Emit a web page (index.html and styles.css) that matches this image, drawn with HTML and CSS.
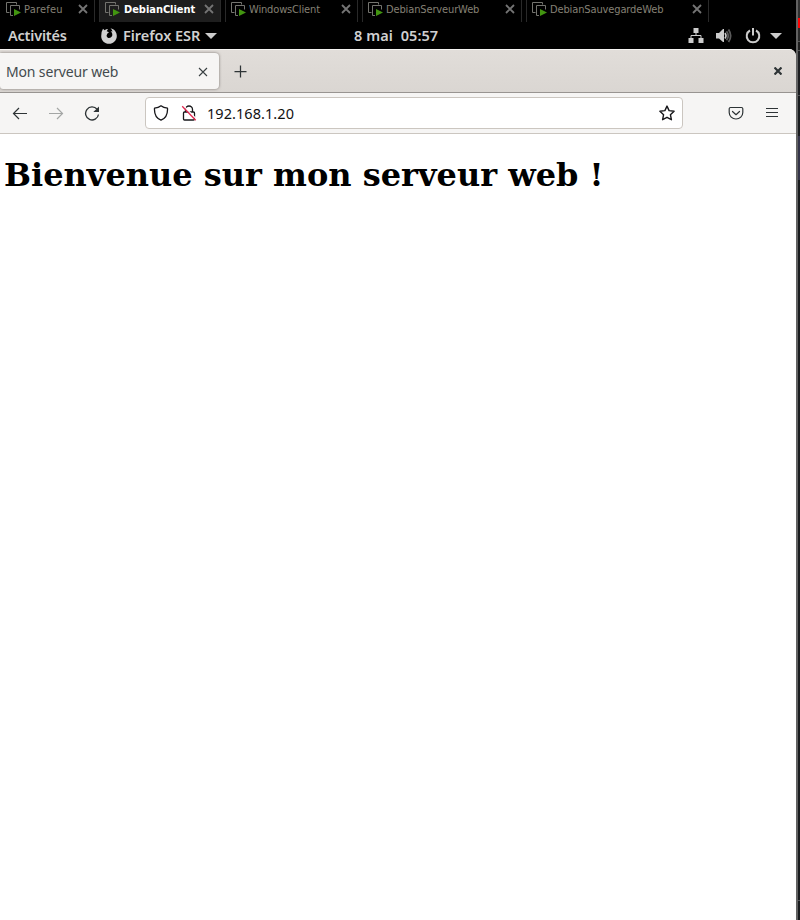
FILE: index.html
```html
<!DOCTYPE html>
<html lang="fr">
<head>
<meta charset="utf-8">
<title>Mon serveur web</title>
<link rel="stylesheet" href="styles.css">
</head>
<body>
<svg width="0" height="0" class="defs">
  <symbol id="vm" viewBox="0 0 15 15">
    <path d="M3.500 10.500h-3V.5h10v2M7 13.500H4.500v-10h9v4" fill="none" stroke="#74746f"/>
    <path d="M8 7l7 3.500-7 3.500z" fill="#429510"/>
  </symbol>
  <symbol id="vx" viewBox="0 0 10 10"><path d="M1 1l8 8M9 1L1 9" fill="none" stroke="#747474" stroke-width="1.800"/></symbol>
</svg>
<div class="screen">
  <main class="desktop">
    <nav class="vm-tabs">
      <div class="vm-tab t1"><svg class="vm-icon"><use href="#vm"/></svg><span>Parefeu</span><svg class="vm-close"><use href="#vx"/></svg></div>
      <div class="vm-tab t2 active"><svg class="vm-icon"><use href="#vm"/></svg><span>DebianClient</span><svg class="vm-close"><use href="#vx"/></svg></div>
      <div class="vm-tab t3"><svg class="vm-icon"><use href="#vm"/></svg><span>WindowsClient</span><svg class="vm-close"><use href="#vx"/></svg></div>
      <div class="vm-tab t4"><svg class="vm-icon"><use href="#vm"/></svg><span>DebianServeurWeb</span><svg class="vm-close"><use href="#vx"/></svg></div>
      <div class="vm-tab t5"><svg class="vm-icon"><use href="#vm"/></svg><span>DebianSauvegardeWeb</span><svg class="vm-close"><use href="#vx"/></svg></div>
    </nav>
    <header class="gnome">
      <span class="activities">Activités</span>
      <svg class="firefox" viewBox="0 0 16 16"><path d="M2 .8L3.600 2.200Q5 1 7 1L5.700 3.300 8 4.300 6.200 5.800Q4.800 8 6.500 9.500 8 10.600 9.800 9.600 11.800 8.300 11.300 6 11 4.200 9.700 3.200L11.500 3.500Q11 1.500 9.500.3C13.500 1 15.800 4.500 15.800 8 15.800 12.500 12.300 15.800 8 15.800S.2 12.500.2 8.200Q.2 3.500 2 .8z" fill="#d0d0d0"/></svg>
      <span class="app">Firefox ESR</span>
      <svg class="arrow" viewBox="0 0 12 6"><path d="M0 0h12L6 6z" fill="#ccc"/></svg>
      <time class="clock">8 mai&nbsp; 05:57</time>
      <svg class="network" viewBox="0 0 16 16"><path d="M5.500 0h5v5h-5zM.5 10h5v5h-5zM10.500 10h5v5h-5z" fill="#ccc"/><path d="M8 4v3.500M3 11V7.500h10V11" fill="none" stroke="#ccc"/></svg>
      <svg class="volume" viewBox="0 0 16 14"><path d="M0 4h3l4-4h1v13H7L3 9.500H0z" fill="#ccc"/><path d="M9 4q2 2.800 0 5.500" fill="none" stroke="#ccc" stroke-width="1.600"/><path d="M10.500 2.200q3.500 4.500 0 9M12.500.5q4.300 6.300 0 12.500" fill="none" stroke="#5a5a5a" stroke-width="1.800"/></svg>
      <svg class="power" viewBox="0 0 16 16"><path d="M5 2.500a6.300 6.300 0 1 0 6 0" fill="none" stroke="#ccc" stroke-width="2"/><path d="M8 0v7.500" stroke="#ccc" stroke-width="2"/></svg>
      <svg class="arrow" viewBox="0 0 12 6"><path d="M0 0h12L6 6z" fill="#ccc"/></svg>
    </header>
    <section class="browser">
      <div class="titlebar">
        <div class="page-tab"><span>Mon serveur web</span><svg class="tab-close" viewBox="0 0 10 10"><path d="M1 1l8 8M9 1L1 9" stroke="#3a4043" stroke-width="1.100"/></svg></div>
        <svg class="new-tab" viewBox="0 0 13 13"><path d="M6.500 .5v12M.5 6.500h12" stroke="#2e3436" stroke-width="1.250"/></svg>
        <svg class="window-close" viewBox="0 0 8 8"><path d="M.5.5l7 7M7.500.5l-7 7" stroke="#2e3436" stroke-width="2.200"/></svg>
      </div>
      <div class="toolbar">
        <svg class="icon back" viewBox="0 0 16 16"><path d="M15 8.500H1.500M7 3L1.500 8.500 7 14" fill="none" stroke="#2e3436" stroke-width="1.200"/></svg>
        <svg class="icon forward" viewBox="0 0 16 16"><path d="M1 8.500h13.500M9 3l5.500 5.500L9 14" fill="none" stroke="#a4a6a5" stroke-width="1.200"/></svg>
        <svg class="icon reload" viewBox="0 0 16 16"><path d="M13.100 4.300A6.500 6.500 0 1 0 14.500 9.500" fill="none" stroke="#2e3436" stroke-width="1.350"/><path d="M15 1.500v5.600H9.300z" fill="#2e3436"/></svg>
        <div class="url">
          <svg class="icon" viewBox="0 0 16 16"><path d="M8 .8C6 2.500 4 3 1.500 3.200 1.200 8.200 2.600 13 8 15.200 13.400 13 14.800 8.200 14.500 3.200 12 3 10 2.500 8 .8z" fill="none" stroke="#17171a" stroke-width="1.300" stroke-linejoin="round"/></svg>
          <svg class="icon lock" viewBox="0 0 16 16"><path d="M4.500 7V4.500a3.500 3.500 0 0 1 7 0V7M3.500 7h9q1 0 1 1v6q0 1-1 1h-9q-1 0-1-1V8q0-1 1-1z" fill="none" stroke="#17171a" stroke-width="1.300"/><path d="M2.500.8l13 13.400" stroke="#fff" stroke-width="1.300"/><path d="M1.200 1.200l13.500 14" stroke="#e22850" stroke-width="1.300"/></svg>
          <span>192.168.1.20</span>
          <svg class="icon star" viewBox="0 0 16 16"><path d="M8 1.100l2.100 4.500 5 .6-3.700 3.500 1 5L8 12.300l-4.400 2.400 1-5L.9 6.200l5-.6z" fill="none" stroke="#17171a" stroke-width="1.400" stroke-linejoin="round"/></svg>
        </div>
        <svg class="icon pocket" viewBox="0 0 16 16"><path d="M2.500 2.500h11q1.300 0 1.300 1.300v3.700a6.800 6.500 0 0 1-13.600 0V3.800Q1.200 2.500 2.500 2.500zM4.500 6.500L8 9.700l3.500-3.200" fill="none" stroke="#2e3436" stroke-width="1.200" stroke-linecap="round" stroke-linejoin="round"/></svg>
        <svg class="menu" viewBox="0 0 12 10"><path d="M0 .5h12M0 4.500h12M0 8.500h12" stroke="#2e3436" stroke-width="1.100"/></svg>
      </div>
      <article class="page"><h1>Bienvenue sur mon serveur web !</h1></article>
    </section>
  </main>
  <aside class="edge"></aside>
</div>
</body>
</html>
```
FILE: styles.css
```css
* { box-sizing: border-box; }
body { margin: 0; background: #000; overflow: hidden; }
svg { display: block; flex: none; }
.defs { position: absolute; }
.screen { display: grid; grid-template-columns: 796px 4px; height: 920px; }
.desktop { display: flex; flex-direction: column; min-width: 0; background: #000; }
.vm-tabs { display: flex; height: 22px; }
.vm-tab {
  display: flex; align-items: flex-start; height: 22px; margin-right: 4px;
  padding-left: 5px; border: solid #292929; border-width: 0 1px;
  color: #858075; font: 11px/19px "DejaVu Sans Condensed", "DejaVu Sans", sans-serif;
  font-stretch: condensed; white-space: nowrap;
}
.vm-tab.t1 { width: 95px; padding-left: 6px; border-left: 0; }
.vm-tab.t2 { width: 122px; }
.vm-tab.t3 { width: 133px; }
.vm-tab.t4 { width: 160px; }
.vm-tab.t5 { width: 183px; margin: 0; }
.vm-tab.active { background: #1e1e1e; color: #fff; font-weight: bold; }
.t1 span { letter-spacing: .2px; }
.t2 span { letter-spacing: -.04px; }
.t3 span { letter-spacing: -.15px; }
.t4 span, .t5 span { letter-spacing: -.13px; }
.vm-icon { width: 15px; height: 15px; margin: 2px 3px 0 0; }
.t2 .vm-icon { margin-right: 4px; }
.vm-close { width: 10px; height: 10px; margin: 4px 6px 0 auto; }
.gnome {
  display: flex; align-items: center; height: 27px; padding: 0 14px 0 8px;
  color: #d0d0d0; font: 600 14.5px/27px "Noto Sans", sans-serif; white-space: nowrap;
}
.activities { width: 93px; letter-spacing: -.2px; }
.firefox { width: 16px; height: 16px; margin-right: 6px; }
.app { width: 82px; letter-spacing: -.05px; }
.arrow { width: 12px; height: 6px; }
.gnome .clock { width: 90px; margin-left: 137px; letter-spacing: .08px; }
.network { width: 16px; height: 16px; margin-left: auto; }
.volume { width: 16px; height: 14px; margin-left: 12px; }
.power { width: 16px; height: 16px; margin: 0 9px 0 13px; }
.browser { flex: 1; background: #fff; border-radius: 0 7px 0 0; overflow: hidden; }
.titlebar {
  display: flex; align-items: center; height: 44px;
  border-top: 1px solid #f5f4f2; border-bottom: 1px solid #989491;
  background: linear-gradient(#e1ddd9, #dad6d2);
}
.page-tab {
  display: flex; align-items: center; justify-content: space-between;
  width: 219px; height: 36px; padding: 0 11px 0 6px; background: #f6f5f4;
  border-radius: 0 4px 4px 3px; box-shadow: 0 0 3px #77716d;
  color: #444b4e; font: 14px/37px "Noto Sans", sans-serif; letter-spacing: -.15px;
}
.tab-close { width: 10px; height: 10px; margin-top: 1px; }
.new-tab { width: 13px; height: 13px; margin: 1px 0 0 15px; }
.window-close { width: 8px; height: 8px; margin: 0 14px 0 auto; }
.toolbar {
  display: flex; align-items: center; height: 41px; padding: 0 18px 0 12px;
  background: #f6f5f4; border-bottom: 1px solid #cbc6c0;
}
.icon { width: 16px; height: 16px; }
.forward, .reload { margin-left: 20px; }
.url {
  display: flex; align-items: center; width: 538px; height: 32px;
  margin-left: 45px; padding: 0 7px; background: #fff;
  border: 1px solid #cbc6c0; border-radius: 4px;
  color: #111; font: 14.500px/30px "Noto Sans", sans-serif; letter-spacing: .06px;
}
.lock { margin: 0 10px 0 12px; }
.star { margin-left: auto; }
.pocket { margin-left: 45px; }
.menu { width: 12px; height: 10px; margin-left: auto; }
.page { padding: 19px 4px; }
h1 { margin: 0; color: #000; font: bold 32px/44px "DejaVu Serif", serif; white-space: nowrap; }
.edge {
  border-left: 2px solid #626262;
  background: linear-gradient(#303030 0 18px, #f00 18px 28px, #292929 28px 41px, #555 41px 42px, #1c1c1c 42px 50px, #555 50px 51px, #1c1d20 51px 95px, #505053 95px 96px, #191b1e 96px 136px, #343449 136px 180px, #1a1c1f 180px 900px, #55565a 900px 901px, #1a1c1f 901px);
}
```
